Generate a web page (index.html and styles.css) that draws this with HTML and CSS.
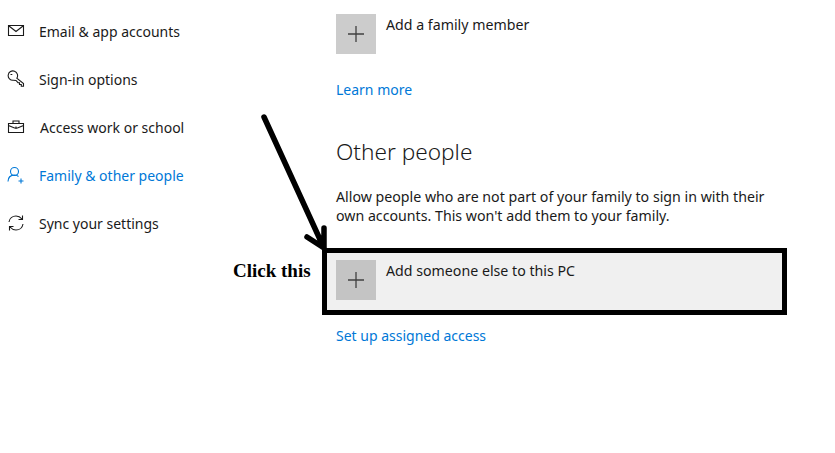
FILE: index.html
```html
<!DOCTYPE html>
<html lang="en">
<head>
    <meta charset="UTF-8">
    <meta name="viewport" content="width=device-width, initial-scale=1.0">
    <link rel="stylesheet" href="styles.css">
    <title>Family &amp; other people</title>
</head>
<body>
    <div class="page">
        <nav class="sidebar">
            <a class="nav-item">
                <svg class="nav-icon" viewBox="0 0 18 18"><path d="M1.500 3.500h15v10h-15zM2 4l7 5.500 7-5.500"/></svg>
                Email &amp; app accounts
            </a>
            <a class="nav-item">
                <svg class="nav-icon" viewBox="0 0 18 18"><path d="M9.800 8.200A4.700 4.700 0 1 0 6.300 10.300L9 10.500l2 2.200h1.500v1.800h1.800v1.800h2.200v-2.800zM3.500 4.500h1.800"/></svg>
                Sign-in options
            </a>
            <a class="nav-item nav-item-work">
                <svg class="nav-icon" viewBox="0 0 18 18"><path d="M1.500 5.500h15v9h-15zM6 5.500v-2.500h6v2.500M1.500 7.500l6 2.500h3l6-2.500M9 8.500v2.500"/></svg>
                Access work or school
            </a>
            <a class="nav-item active">
                <svg class="nav-icon" viewBox="0 0 18 18"><circle cx="7.500" cy="5.500" r="4"/><path d="M1 15.500c0-4 2.500-6.500 6.500-6.500 1.500 0 3 .5 4 1.500M14 12.500v5M11.500 15h5"/></svg>
                Family &amp; other people
            </a>
            <a class="nav-item">
                <svg class="nav-icon" viewBox="0 0 18 18"><path d="M2 8c.5-3.500 3.500-6 7-6 2.500 0 4.500 1.200 6 3M15.500 1.500v4h-4M16 10c-.5 3.500-3.500 6-7 6-2.500 0-4.500-1.200-6-3M2.500 16.500v-4h4"/></svg>
                Sync your settings
            </a>
        </nav>

        <main class="content">
            <div class="add-row">
                <div class="add-tile"><svg class="plus" viewBox="0 0 16 16"><path d="M8 0v16M0 8h16"/></svg></div>
                <span>Add a family member</span>
            </div>
            <a class="link learn-more">Learn more</a>

            <h2>Other people</h2>
            <p>Allow people who are not part of your family to sign in with their own accounts. This won't add them to your family.</p>

            <div class="add-row highlighted">
                <div class="add-tile"><svg class="plus" viewBox="0 0 16 16"><path d="M8 0v16M0 8h16"/></svg></div>
                <span>Add someone else to this PC</span>
            </div>
            <a class="link assigned">Set up assigned access</a>
        </main>
    </div>

    <!-- annotation on top of the screenshot -->
    <div class="click-label">Click this</div>
    <svg class="arrow" viewBox="0 0 835 453">
        <path d="M264 117L323 246M324 228V248M307 237L324 248"/>
    </svg>
</body>
</html>
```

FILE: styles.css
```css
body {
    margin: 0;
    background-color: #ffffff;
    color: #1a1a1a;
    font-family: "Noto Sans", "Open Sans", sans-serif;
    font-size: 14px;
}

.page {
    display: flex;
    height: 453px;
    overflow: hidden;
}

.sidebar {
    width: 336px;
    flex-shrink: 0;
    padding-top: 7px;
    box-sizing: border-box;
}

.nav-item {
    display: flex;
    align-items: center;
    gap: 14px;
    height: 48px;
    padding-left: 7px;
}

.nav-item-work {
    gap: 15px;
}

.nav-item.active {
    color: #0078d7;
}

.nav-icon {
    width: 18px;
    height: 18px;
    fill: none;
    stroke: currentColor;
    stroke-width: 1.1;
}

.content {
    width: 451px;
    padding-top: 14px;
}

.add-row {
    display: flex;
    gap: 10px;
}

.add-row span {
    padding-top: 1px;
    font-size: 14.2px;
    line-height: 20px;
}

.add-tile {
    width: 40px;
    height: 40px;
    background-color: #cccccc;
    display: flex;
    align-items: center;
    justify-content: center;
}

.plus {
    width: 16px;
    height: 16px;
    fill: none;
    stroke: #404040;
    stroke-width: 1.3;
}

.link {
    display: block;
    color: #0078d7;
    line-height: 20px;
}

.learn-more {
    margin-top: 26px;
}

h2 {
    margin: 37px 0 0;
    font-size: 22.6px;
    font-weight: 300;
    line-height: 30px;
}

p {
    margin: 20px 0 0;
    font-size: 14.2px;
    line-height: 19px;
}

.highlighted {
    margin: 23px 0 0 -14px;
    width: 465px;
    box-sizing: border-box;
    border: 5px solid #000000;
    background-color: #f0f0f0;
    padding: 7px 9px 10px;
}

.highlighted .add-tile {
    background-color: #c4c4c4;
}

.assigned {
    margin-top: 11px;
}

.click-label {
    position: absolute;
    left: 233px;
    top: 260px;
    font-family: "Liberation Serif", serif;
    font-size: 19px;
    font-weight: 700;
    line-height: 22px;
    color: #000000;
}

.arrow {
    position: absolute;
    left: 0;
    top: 0;
    width: 835px;
    height: 453px;
    fill: none;
    stroke: #000000;
    stroke-width: 5.5;
    stroke-linecap: round;
    pointer-events: none;
}
```
